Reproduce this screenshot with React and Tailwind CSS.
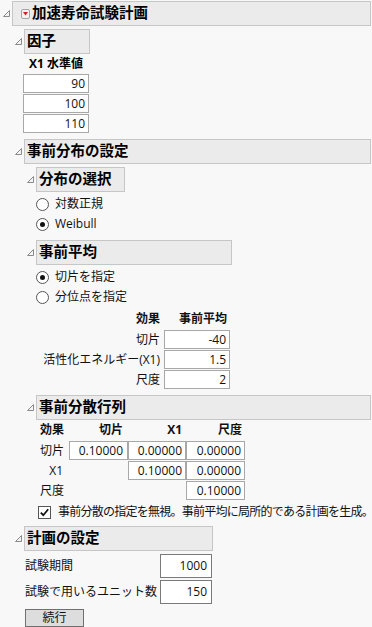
import React from 'react';

const font = { fontFamily: '"Open Sans", "Noto Sans CJK JP", sans-serif' };

const Tri = () => (
  <div className="w-[12px] h-[25px] shrink-0 pl-[3px] pt-[9px]">
    <svg width="7" height="7" viewBox="0 0 7 7">
      <polygon points="6.5,0.5 6.5,6.5 0.5,6.5" fill="#f4f4f4" stroke="#8a8a8a" strokeWidth="1" />
    </svg>
  </div>
);

const Header = ({ title, className, menu }) => (
  <div className="flex">
    <Tri />
    <div className={`h-[25px] flex items-center border border-[#c6c6c6] bg-[#ebebeb] ${className}`}>
      {menu && (
        <div className="ml-[8px] mr-[2px] w-[9px] h-[10px] rounded-[2px] border border-[#a4a4a4] bg-[#f2f2f2] flex items-center justify-center">
          <svg width="5" height="4" viewBox="0 0 5 4">
            <polygon points="0,0 5,0 2.5,3.5" fill="#d41f1f" />
          </svg>
        </div>
      )}
      <span className={`${menu ? '' : 'pl-[2px]'} text-[14.5px] font-bold text-black leading-none`}>{title}</span>
    </div>
  </div>
);

const Cell = ({ v, className }) => (
  <div className={`h-[19px] border border-[#a8a8a8] bg-white text-right pr-[3px] text-[12px] leading-[17px] text-[#111] ${className}`}>
    {v}
  </div>
);

const Radio = ({ label, on }) => (
  <div className="h-[20px] flex items-center gap-[6px]">
    <div className="w-[13px] h-[13px] rounded-full border border-[#555] bg-white flex items-center justify-center">
      {on && <div className="w-[5px] h-[5px] rounded-full bg-[#111]" />}
    </div>
    <span className="text-[12px] text-[#111] leading-none">{label}</span>
  </div>
);

export default function App() {
  return (
    <div className="w-[372px] h-[627px] bg-[#f8f8f8] pt-[1px] pr-[1px] overflow-hidden" style={font}>
      <Header title="加速寿命試験計画" className="flex-1" menu />

      <div className="pl-[12px]">
        {/* 因子 */}
        <div className="mt-[3px]">
          <Header title="因子" className="w-[66px]" />
        </div>
        <div className="pl-[12px]">
          <div className="h-[20px] flex items-center pl-[5px] text-[12px] font-bold text-black">X1 水準値</div>
          <div className="ml-[-1px] flex flex-col gap-[1px] w-[66px]">
            <Cell v="90" />
            <Cell v="100" />
            <Cell v="110" />
          </div>
        </div>

        {/* 事前分布の設定 */}
        <div className="mt-[6px]">
          <Header title="事前分布の設定" className="flex-1" />
        </div>
        <div className="pl-[12px]">
          <div className="mt-[3px]">
            <Header title="分布の選択" className="w-[89px]" />
          </div>
          <div className="pl-[12px] mt-[2px]">
            <Radio label="対数正規" />
            <Radio label="Weibull" on />
          </div>

          <div className="mt-[6px]">
            <Header title="事前平均" className="w-[196px]" />
          </div>
          <div className="pl-[12px] mt-[2px]">
            <Radio label="切片を指定" on />
            <Radio label="分位点を指定" />
            <div className="mt-[2px] grid grid-cols-[128px_66px] gap-y-[1px] text-[12px] text-[#111]">
              <div className="h-[20px] flex items-center justify-end pr-[4px] font-bold">効果</div>
              <div className="h-[20px] flex items-center justify-end pr-[3px] font-bold">事前平均</div>
              <div className="h-[19px] flex items-center justify-end pr-[4px]">切片</div>
              <Cell v="-40" />
              <div className="h-[19px] flex items-center justify-end pr-[4px]">活性化エネルギー(X1)</div>
              <Cell v="1.5" />
              <div className="h-[19px] flex items-center justify-end pr-[4px]">尺度</div>
              <Cell v="2" />
            </div>
          </div>

          <div className="mt-[6px]">
            <Header title="事前分散行列" className="flex-1" />
          </div>
          <div className="pl-[12px]">
            <div className="grid grid-cols-[33px_59px_58px_59px] gap-y-[1px] text-[12px] text-[#111]">
              <div className="h-[20px] flex items-center pl-[4px] font-bold">効果</div>
              <div className="h-[20px] flex items-center justify-end pr-[5px] font-bold">切片</div>
              <div className="h-[20px] flex items-center justify-end pr-[4px] font-bold">X1</div>
              <div className="h-[20px] flex items-center justify-end pr-[3px] font-bold">尺度</div>

              <div className="h-[19px] flex items-center pl-[4px]">切片</div>
              <Cell v="0.10000" className="pr-[4px]" />
              <Cell v="0.00000" className="pr-[3px]" />
              <Cell v="0.00000" className="pr-[3px]" />

              <div className="h-[19px] flex items-center justify-end pr-[6px]">X1</div>
              <div />
              <Cell v="0.10000" className="pr-[3px]" />
              <Cell v="0.00000" className="pr-[3px]" />

              <div className="h-[19px] flex items-center pl-[4px]">尺度</div>
              <div />
              <div />
              <Cell v="0.10000" className="pr-[3px]" />
            </div>
            <div className="mt-[2px] h-[20px] flex items-center gap-[7px] pl-[2px]">
              <div className="w-[13px] h-[13px] border border-[#555] bg-white flex items-center justify-center">
                <svg width="11" height="11" viewBox="0 0 11 11">
                  <path d="M1.8 5.6 L4.3 8.2 L9.2 2.2" fill="none" stroke="#111" strokeWidth="1.8" />
                </svg>
              </div>
              <span className="text-[12px] tracking-[-0.75px] text-[#111] leading-none whitespace-nowrap">
                事前分散の指定を無視。事前平均に局所的である計画を生成。
              </span>
            </div>
          </div>
        </div>

        {/* 計画の設定 */}
        <div className="mt-[4px]">
          <Header title="計画の設定" className="w-[189px]" />
        </div>
        <div className="pl-[13px] mt-[3px]">
          <div className="grid grid-cols-[135px_52px] gap-y-[2px] text-[12px] text-[#111]">
            <div className="h-[24px] flex items-center">試験期間</div>
            <div className="h-[24px] border border-[#7a7a7a] bg-white flex items-center justify-end pr-[4px]">1000</div>
            <div className="h-[24px] flex items-center whitespace-nowrap">試験で用いるユニット数</div>
            <div className="h-[24px] border border-[#7a7a7a] bg-white flex items-center justify-end pr-[4px]">150</div>
          </div>
          <button className="mt-[5px] w-[59px] h-[18px] border border-[#707070] bg-[#dddddd] text-[12px] text-[#111] flex items-center justify-center leading-none">
            続行
          </button>
        </div>
      </div>
    </div>
  );
}
